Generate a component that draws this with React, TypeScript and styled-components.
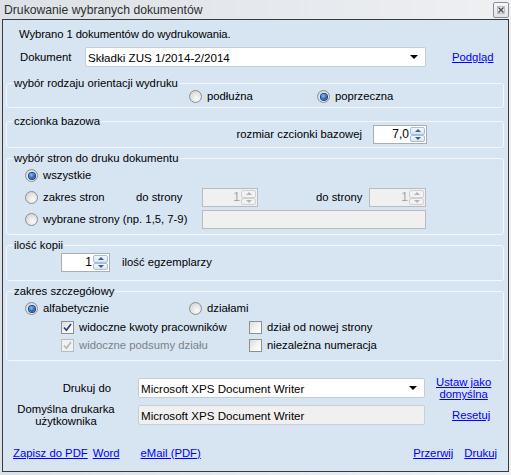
import React from "react";
import styled, { createGlobalStyle, css } from "styled-components";

const GlobalStyle = createGlobalStyle`
  html, body { margin: 0; padding: 0; }
  body {
    background: #e9ecef;
    font-family: "Liberation Sans", Arial, sans-serif;
    font-size: 11.3px;
    color: #000;
  }
`;

const Window = styled.div`
  width: 511px;
  height: 475px;
  display: flex;
  flex-direction: column;
  background: linear-gradient(90deg, #dce1e7 0%, #e6e9ed 55%, #eef0f2 100%);
`;

const TitleBar = styled.div`
  height: 19px;
  display: flex;
  align-items: center;
  justify-content: space-between;
  padding: 0 2px 0 4px;
`;

const Title = styled.span`
  font-size: 12.2px;
  color: #2e2e2e;
`;

const CloseBtn = styled.div`
  width: 16px;
  height: 16px;
  box-sizing: border-box;
  margin-top: 1px;
  border: 1px solid #8a8f97;
  border-radius: 2px;
  background: linear-gradient(#f6f7f9, #dfe2e7);
  display: flex;
  align-items: center;
  justify-content: center;
`;

const Body = styled.div`
  flex: 1;
  margin: 0 2px 3px 2px;
  border: 1px solid #3a3a3a;
  background: #d7e4f2;
  padding: 0 4px 0 3px;
  display: flex;
  flex-direction: column;
`;

const Info = styled.div`
  margin: 8px 0 0 13px;
  line-height: 13px;
  letter-spacing: -0.1px;
`;

const Row = styled.div<{ $mt?: number; $pl?: number; $h?: number }>`
  display: flex;
  align-items: center;
  height: ${(p) => p.$h ?? 19}px;
  margin-top: ${(p) => p.$mt ?? 0}px;
  padding-left: ${(p) => p.$pl ?? 0}px;
`;

const Label = styled.span<{ $w?: number; $ml?: number; $muted?: boolean }>`
  display: inline-block;
  flex: none;
  line-height: 13px;
  white-space: nowrap;
  ${(p) => p.$w !== undefined && css`width: ${p.$w}px;`}
  margin-left: ${(p) => p.$ml ?? 0}px;
  color: ${(p) => (p.$muted ? "#7c8287" : "#000")};
`;

const Link = styled.a<{ $ml?: number }>`
  color: #0000ff;
  text-decoration: underline;
  line-height: 12px;
  white-space: nowrap;
  cursor: pointer;
  margin-left: ${(p) => p.$ml ?? 0}px;
`;

const Combo = styled.div<{ $w: number; $readonly?: boolean }>`
  width: ${(p) => p.$w}px;
  height: 20px;
  box-sizing: border-box;
  flex: none;
  display: flex;
  align-items: center;
  padding: 0 7px 0 2px;
  border: 1px solid ${(p) => (p.$readonly ? "#c9cfd6" : "#c4ccd5")};
  border-radius: 2px;
  background: ${(p) => (p.$readonly ? "#f0f0f0" : "#fff")};
  font-size: 11.6px;
`;

const ComboText = styled.span`
  flex: 1;
  white-space: nowrap;
`;

const Arrow = styled.span`
  width: 0;
  height: 0;
  border-left: 4px solid transparent;
  border-right: 4px solid transparent;
  border-top: 4px solid #000;
`;

const Group = styled.fieldset<{ $mt: number; $pb: number }>`
  margin: ${(p) => p.$mt}px 0 0 0;
  padding: 0 0 ${(p) => p.$pb}px 0;
  min-width: 0;
  border: 1px solid #f4f7fa;
  border-radius: 3px;
`;

const Legend = styled.legend`
  margin-left: 6px;
  padding: 0 1px;
  line-height: 13px;
`;

const RadioItem = styled.label<{ $w?: number }>`
  display: flex;
  align-items: center;
  flex: none;
  gap: 5px;
  ${(p) => p.$w !== undefined && css`width: ${p.$w}px;`}
  line-height: 13px;
  white-space: nowrap;
`;

const RadioDot = styled.span<{ $on?: boolean }>`
  width: 13px;
  height: 13px;
  box-sizing: border-box;
  border-radius: 50%;
  border: 1px solid #8d8f92;
  background: radial-gradient(circle at 62% 68%, #fbfbfb 0%, #e2e2e2 55%, #c9c9c9 100%);
  display: inline-flex;
  align-items: center;
  justify-content: center;
  flex: none;
  ${(p) =>
    p.$on &&
    css`
      &::after {
        content: "";
        width: 6px;
        height: 6px;
        border-radius: 50%;
        background: radial-gradient(circle at 40% 35%, #8ec5f5 0%, #2b6fc4 50%, #0c2f72 100%);
        box-shadow: 0 0 0 1px #1a3f7c;
      }
    `}
`;

const CheckBox = styled.span<{ $disabled?: boolean }>`
  width: 13px;
  height: 13px;
  box-sizing: border-box;
  flex: none;
  border: 1px solid ${(p) => (p.$disabled ? "#b9bcbf" : "#8e8f8f")};
  background: ${(p) =>
    p.$disabled ? "#f1f1f1" : "linear-gradient(135deg, #dcdcdc 0%, #f6f6f6 60%, #ffffff 100%)"};
  display: flex;
  align-items: center;
  justify-content: center;
`;

const Spin = styled.div<{ $w: number; $disabled?: boolean }>`
  width: ${(p) => p.$w}px;
  height: 19px;
  box-sizing: border-box;
  flex: none;
  display: flex;
  padding: 1px 1px 1px 0;
  border: 1px solid ${(p) => (p.$disabled ? "#b8bcc0" : "#abadb3")};
  background: ${(p) => (p.$disabled ? "#f0f0f0" : "#fff")};
`;

const SpinValue = styled.span<{ $disabled?: boolean }>`
  flex: 1;
  text-align: right;
  padding-right: 1px;
  line-height: 15px;
  font-size: 12px;
  color: ${(p) => (p.$disabled ? "#a3a3a3" : "#000")};
`;

const SpinBtns = styled.div`
  width: 15px;
  display: flex;
  flex-direction: column;
`;

const SpinBtn = styled.div<{ $disabled?: boolean; $down?: boolean }>`
  flex: 1;
  display: flex;
  align-items: center;
  justify-content: center;
  border: 1px solid ${(p) => (p.$disabled ? "#cfd2d5" : "#a9bfd6")};
  border-radius: 2px;
  background: ${(p) =>
    p.$disabled ? "#f2f2f2" : "linear-gradient(#f2f7fc, #d7e6f4)"};
  &::after {
    content: "";
    width: 0;
    height: 0;
    border-left: 3px solid transparent;
    border-right: 3px solid transparent;
    ${(p) =>
      p.$down
        ? css`border-top: 3px solid ${p.$disabled ? "#b4b4b4" : "#3d5f86"};`
        : css`border-bottom: 3px solid ${p.$disabled ? "#b4b4b4" : "#3d5f86"};`}
  }
`;

const TextBox = styled.div<{ $w: number }>`
  width: ${(p) => p.$w}px;
  height: 19px;
  box-sizing: border-box;
  flex: none;
  border: 1px solid #b8bcc0;
  background: #f0f0f0;
`;

const PrinterLabel = styled.div<{ $align: "right" | "center"; $pr: number }>`
  width: 132px;
  box-sizing: border-box;
  flex: none;
  padding-right: ${(p) => p.$pr}px;
  text-align: ${(p) => p.$align};
  line-height: 12px;
`;

const LinkStack = styled.div<{ $ml: number }>`
  margin-left: ${(p) => p.$ml}px;
  display: flex;
  flex-direction: column;
  align-items: center;
  text-align: center;
`;

const Footer = styled.div`
  display: flex;
  align-items: center;
  margin-top: 21px;
  padding: 0 7px;
  height: 13px;
`;

const Spacer = styled.span`
  flex: 1;
`;

function Radio({ label, on, w }: { label: string; on?: boolean; w?: number }) {
  return (
    <RadioItem $w={w}>
      <RadioDot $on={on} />
      <span>{label}</span>
    </RadioItem>
  );
}

function Check({
  label,
  checked,
  disabled,
  w,
}: {
  label: string;
  checked?: boolean;
  disabled?: boolean;
  w?: number;
}) {
  return (
    <RadioItem $w={w}>
      <CheckBox $disabled={disabled}>
        {checked ? (
          <svg width="9" height="9" viewBox="0 0 9 9">
            <path
              d="M1 4.5 L3.4 7.2 L8 1"
              fill="none"
              stroke={disabled ? "#b5b5b5" : "#26358f"}
              strokeWidth="1.6"
            />
          </svg>
        ) : null}
      </CheckBox>
      <Label $muted={disabled}>{label}</Label>
    </RadioItem>
  );
}

function Spinner({ value, w, disabled }: { value: string; w: number; disabled?: boolean }) {
  return (
    <Spin $w={w} $disabled={disabled}>
      <SpinValue $disabled={disabled}>{value}</SpinValue>
      <SpinBtns>
        <SpinBtn $disabled={disabled} />
        <SpinBtn $disabled={disabled} $down />
      </SpinBtns>
    </Spin>
  );
}

export default function App() {
  return (
    <>
      <GlobalStyle />
      <Window>
        <TitleBar>
          <Title>Drukowanie wybranych dokumentów</Title>
          <CloseBtn>
            <svg width="8" height="8" viewBox="0 0 8 8">
              <path d="M1.5 1.5 L6.5 6.5 M6.5 1.5 L1.5 6.5" stroke="#4a4f57" strokeWidth="1.4" />
              <rect x="0.5" y="0.5" width="7" height="7" fill="none" stroke="#9aa0a8" strokeWidth="0.6" />
            </svg>
          </CloseBtn>
        </TitleBar>
        <Body>
          <Info>Wybrano 1 dokumentów do wydrukowania.</Info>

          <Row $mt={6} $pl={14} $h={20}>
            <Label $w={65}>Dokument</Label>
            <Combo $w={341}>
              <ComboText>Składki ZUS 1/2014-2/2014</ComboText>
              <Arrow />
            </Combo>
            <Link $ml={26}>Podgląd</Link>
          </Row>

          <Group $mt={10} $pb={4}>
            <Legend>wybór rodzaju orientacji wydruku</Legend>
            <Row $h={13} $pl={182}>
              <Radio label="podłużna" w={128} />
              <Radio label="poprzeczna" on />
            </Row>
          </Group>

          <Group $mt={7} $pb={3}>
            <Legend>czcionka bazowa</Legend>
            <Row $mt={-3} style={{ justifyContent: "flex-end", paddingRight: 76 }}>
              <Label>rozmiar czcionki bazowej</Label>
              <Label $w={11} />
              <Spinner value="7,0" w={54} />
            </Row>
          </Group>

          <Group $mt={4} $pb={5}>
            <Legend>wybór stron do druku dokumentu</Legend>
            <Row $mt={1} $pl={18}>
              <Radio label="wszystkie" on />
            </Row>
            <Row $mt={3} $pl={18}>
              <Radio label="zakres stron" w={111} />
              <Label $w={66}>do strony</Label>
              <Spinner value="1" w={56} disabled />
              <Label $w={53} $ml={58}>
                do strony
              </Label>
              <Spinner value="1" w={57} disabled />
            </Row>
            <Row $mt={3} $pl={18}>
              <Radio label="wybrane strony (np. 1,5, 7-9)" w={177} />
              <TextBox $w={224} />
            </Row>
          </Group>

          <Group $mt={4} $pb={8}>
            <Legend>ilość kopii</Legend>
            <Row $mt={1} $pl={54}>
              <Spinner value="1" w={49} />
              <Label $ml={12}>ilość egzemplarzy</Label>
            </Row>
          </Group>

          <Group $mt={4} $pb={8}>
            <Legend>zakres szczegółowy</Legend>
            <Row $mt={4} $h={13} $pl={18}>
              <Radio label="alfabetycznie" on w={164} />
              <Radio label="działami" />
            </Row>
            <Row $mt={6} $h={13} $pl={54}>
              <Check label="widoczne kwoty pracowników" checked w={188} />
              <Check label="dział od nowej strony" />
            </Row>
            <Row $mt={5} $h={13} $pl={54}>
              <Check label="widoczne podsumy działu" checked disabled w={188} />
              <Check label="niezależna numeracja" />
            </Row>
          </Group>

          <Row $mt={17} $h={20}>
            <PrinterLabel $align="right" $pr={27}>
              Drukuj do
            </PrinterLabel>
            <Combo $w={287}>
              <ComboText>Microsoft XPS Document Writer</ComboText>
              <Arrow />
            </Combo>
            <LinkStack $ml={11}>
              <Link>Ustaw jako</Link>
              <Link>domyślna</Link>
            </LinkStack>
          </Row>

          <Row $mt={7} $h={20}>
            <PrinterLabel $align="center" $pr={12}>
              Domyślna drukarka
              <br />
              użytkownika
            </PrinterLabel>
            <Combo $w={287} $readonly>
              <ComboText>Microsoft XPS Document Writer</ComboText>
            </Combo>
            <Link $ml={27}>Resetuj</Link>
          </Row>

          <Footer>
            <Link>Zapisz do PDF</Link>
            <Link $ml={5}>Word</Link>
            <Link $ml={21}>eMail (PDF)</Link>
            <Spacer />
            <Link>Przerwij</Link>
            <Link $ml={11}>Drukuj</Link>
          </Footer>
        </Body>
      </Window>
    </>
  );
}
